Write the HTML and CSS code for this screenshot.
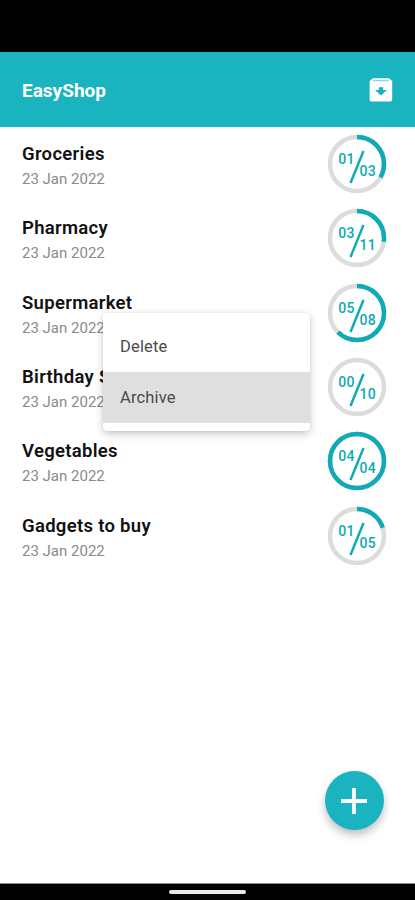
FILE: index.html
```
<!DOCTYPE html>
<html lang="en">
<head>
  <meta charset="UTF-8" />
  <meta name="viewport" content="width=device-width, initial-scale=1.0"/>
  <title>EasyShop</title>
  <link rel="stylesheet" href="styles.css">
</head>
<body>
  <div class="status-bar"></div>

  <header class="app-bar">
    <h1>EasyShop</h1>
    <svg class="archive-icon" viewBox="0 0 24 24">
      <path d="M4 .2h16L23.200 3v18a2.600 2.600 0 0 1-2.600 2.600H3.200A2.600 2.600 0 0 1 .6 21V3z" fill="#fff"/>
      <path d="M4.500 2.400h15" stroke="#8cd9df" stroke-width="1.5" stroke-linecap="round"/>
      <path d="M9.800 9.200h4.400v2.800H18l-6 5.400L6 12h3.800z" fill="#1ab3c0"/>
    </svg>
  </header>

  <main>
    <ul class="lists" id="lists"></ul>

    <div class="menu">
      <div class="menu-item">Delete</div>
      <div class="menu-item active">Archive</div>
    </div>

    <button class="fab" aria-label="Add list">
      <svg viewBox="0 0 26 26"><path d="M13 0v26M0 13h26" stroke="#fff" stroke-width="3.8"/></svg>
    </button>
  </main>

  <div class="nav-bar"><span class="home-pill"></span></div>

  <script>
    const lists = [
      { name: 'Groceries', done: 1, total: 3 },
      { name: 'Pharmacy', done: 3, total: 11 },
      { name: 'Supermarket', done: 5, total: 8 },
      { name: 'Birthday Shopping', done: 0, total: 10 },
      { name: 'Vegetables', done: 4, total: 4 },
      { name: 'Gadgets to buy', done: 1, total: 5 }
    ];

    const pad = n => String(n).padStart(2, '0');

    // pathLength is 100, so the dash is a percentage
    document.getElementById('lists').innerHTML = lists.map(l => `
      <li class="list-row">
        <div>
          <div class="list-name">${l.name}</div>
          <div class="list-date">23 Jan 2022</div>
        </div>
        <svg class="progress" viewBox="0 0 60 60">
          <circle class="track" cx="30" cy="30" r="27"/>
          ${l.done ? `<circle class="value" cx="30" cy="30" r="27" pathLength="100" stroke-dasharray="${l.done / l.total * 100} 100" transform="rotate(-90 30 30)"/>` : ''}
          <path class="slash" d="M36.500 17L23.500 49"/>
          <text x="11.300" y="29.700">${pad(l.done)}</text>
          <text x="32.500" y="42.300">${pad(l.total)}</text>
        </svg>
      </li>`).join('');
  </script>
</body>
</html>
```
FILE: styles.css
```
:root {
  --primary: #1ab3c0;
  --ring: #0eaab5;
  --track: #dcdcdc;
}

* {
  box-sizing: border-box;
}

body {
  margin: 0;
  height: 900px;
  display: flex;
  flex-direction: column;
  overflow: hidden;
  background: #fff;
  font-family: Roboto, sans-serif;
}

.status-bar {
  height: 52px;
  background: #000;
}

.app-bar {
  height: 75px;
  padding: 0 22px;
  display: flex;
  align-items: center;
  justify-content: space-between;
  background: var(--primary);
}

.app-bar h1 {
  margin: 2px 0 0;
  color: #fff;
  font-size: 19px;
  font-weight: 700;
}

.archive-icon {
  width: 24px;
  height: 24px;
}

main {
  flex: 1;
  position: relative;
}

.lists {
  margin: 0;
  padding: 0;
  list-style: none;
}

.list-row {
  height: 74.3px;
  padding: 0 28px 0 22px;
  display: flex;
  align-items: center;
  justify-content: space-between;
}

.list-name {
  margin-top: 6px;
  color: #111;
  font-size: 18.5px;
  font-weight: 600;
  line-height: 25px;
  letter-spacing: 0.3px;
}

.list-date {
  color: #8a8a8a;
  font-size: 15px;
  line-height: 25px;
}

.progress {
  width: 60px;
  height: 60px;
}

.progress circle {
  fill: none;
  stroke-width: 4.5;
}

.progress .track {
  stroke: var(--track);
}

.progress .value {
  stroke: var(--ring);
}

.progress .slash {
  stroke: var(--ring);
  stroke-width: 2.4;
}

.progress text {
  fill: var(--ring);
  font-size: 14px;
  font-weight: 500;
  letter-spacing: 0.2px;
}

/* context menu opened over the list */
.menu {
  position: absolute;
  top: 186px;
  left: 103px;
  width: 207px;
  padding: 8px 0;
  border-radius: 4px;
  background: #fff;
  box-shadow: 0 3px 8px rgba(0,0,0,0.22), 0 0 2px rgba(0,0,0,0.08);
}

.menu-item {
  height: 51px;
  padding: 0 17px;
  color: #4a4a4a;
  font-size: 16.5px;
  line-height: 52px;
  letter-spacing: 0.15px;
}

.menu-item.active {
  background: #dfdfdf;
}

.fab {
  position: absolute;
  right: 31.5px;
  bottom: 53px;
  width: 59px;
  height: 59px;
  padding: 0;
  display: flex;
  align-items: center;
  justify-content: center;
  border: none;
  border-radius: 50%;
  background: var(--primary);
  box-shadow: 0 5px 9px rgba(0,0,0,0.25);
}

.fab svg {
  width: 26px;
  height: 26px;
}

.nav-bar {
  height: 17px;
  display: flex;
  align-items: center;
  justify-content: center;
  border-top: 1px solid #8c8c8c;
  background: #000;
}

.home-pill {
  width: 77px;
  height: 4px;
  border-radius: 2px;
  background: #e8e8e8;
}
```
